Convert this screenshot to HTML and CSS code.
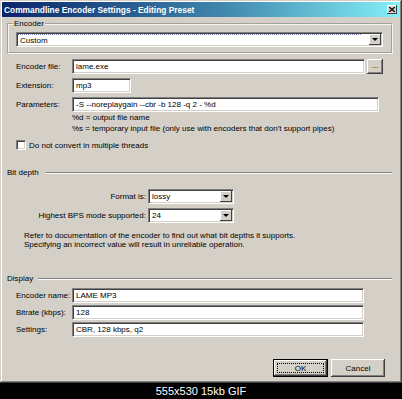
FILE: index.html
```html
<!DOCTYPE html>
<html lang="en">
<head>
<meta charset="UTF-8">
<meta name="viewport" content="width=device-width, initial-scale=1.0">
<title>Commandline Encoder Settings</title>
<link rel="stylesheet" href="styles.css">
</head>
<body>

<div class="window">
  <div class="titlebar">
    <span class="title">Commandline Encoder Settings - Editing Preset</span>
    <span class="close">
      <svg width="6" height="5" viewBox="0 0 6 5"><path d="M0 0 L6 5 M6 0 L0 5" stroke="#000" stroke-width="1.3"/></svg>
    </span>
  </div>

  <div class="content">
    <fieldset class="group">
      <legend>Encoder</legend>
      <div class="combo combo-wide">
        <span class="combo-text focus">Custom</span>
        <span class="arrow"><i></i></span>
      </div>
    </fieldset>

    <div class="form">
      <div class="row">
        <span class="label">Encoder file:</span>
        <div class="edit edit-file">lame.exe</div>
        <span class="btn browse">...</span>
      </div>
      <div class="row">
        <span class="label">Extension:</span>
        <div class="edit edit-ext">mp3</div>
      </div>
      <div class="row">
        <span class="label">Parameters:</span>
        <div class="edit edit-params">-S --noreplaygain --cbr -b 128 -q 2 - %d</div>
      </div>
      <div class="notes">
        <div>%d = output file name</div>
        <div>%s = temporary input file (only use with encoders that don't support pipes)</div>
      </div>
      <div class="check-row">
        <span class="checkbox"></span>
        <span>Do not convert in multiple threads</span>
      </div>
    </div>

    <div class="sep sep-bits">
      <span>Bit depth</span>
      <span class="line"></span>
    </div>

    <div class="brow brow-first">
      <span class="blabel">Format is:</span>
      <div class="combo combo-small">
        <span class="combo-text">lossy</span>
        <span class="arrow"><i></i></span>
      </div>
    </div>
    <div class="brow">
      <span class="blabel">Highest BPS mode supported:</span>
      <div class="combo combo-small">
        <span class="combo-text">24</span>
        <span class="arrow"><i></i></span>
      </div>
    </div>
    <div class="refer">
      <div>Refer to documentation of the encoder to find out what bit depths it supports.</div>
      <div>Specifying an incorrect value will result in unreliable operation.</div>
    </div>

    <div class="sep sep-display">
      <span>Display</span>
      <span class="line"></span>
    </div>

    <div class="form form-display">
      <div class="row row-tight">
        <span class="label">Encoder name:</span>
        <div class="edit edit-display">LAME MP3</div>
      </div>
      <div class="row row-tight">
        <span class="label">Bitrate (kbps):</span>
        <div class="edit edit-display">128</div>
      </div>
      <div class="row row-tight">
        <span class="label">Settings:</span>
        <div class="edit edit-display">CBR, 128 kbps, q2</div>
      </div>
    </div>

    <div class="buttons">
      <span class="btn btn-ok"><span class="focus-rect">OK</span></span>
      <span class="btn btn-cancel">Cancel</span>
    </div>
  </div>
</div>

<div class="caption">555x530 15kb GIF</div>

</body>
</html>
```

FILE: styles.css
```css
* {
  box-sizing: border-box;
}
body {
  margin: 0;
  width: 402px;
  height: 399px;
  overflow: hidden;
  background: #000;
  font-family: "Liberation Sans", Arial, sans-serif;
  font-size: 8px;
  color: #000;
}
.window {
  width: 402px;
  height: 383px;
  padding: 2px;
  background: #d4d0c8;
  box-shadow: inset -1px -1px #404040, inset 1px 1px #d4d0c8, inset -2px -2px #808080, inset 2px 2px #fff;
  display: flex;
  flex-direction: column;
}
.titlebar {
  height: 15px;
  flex: none;
  display: flex;
  align-items: center;
  justify-content: space-between;
  padding: 0 3px 0 2px;
  background: linear-gradient(to right, #0a246a, #3f86ac 55%, #84f0f8);
}
.title {
  color: #fff;
  font-weight: bold;
  font-size: 8.4px;
}
.close {
  width: 10px;
  height: 9px;
  background: #d4d0c8;
  box-shadow: inset -1px -1px #404040, inset 1px 1px #fff;
  display: flex;
  align-items: center;
  justify-content: center;
}
.content {
  padding: 2px 8px 0 5px;
  display: flex;
  flex-direction: column;
}

/* group box */
.group {
  margin: 0;
  padding: 4px 8px 5px 7px;
  border: 2px groove #f6f4f0;
}
.group legend {
  margin-left: -3px;
  padding: 0 1px;
  line-height: 9px;
}

/* sunken controls */
.edit, .combo, .checkbox {
  background: #fff;
  border: 1px solid;
  border-color: #808080 #fff #fff #808080;
  box-shadow: inset 1px 1px #404040, inset -1px -1px #d4d0c8;
}
.edit {
  height: 15px;
  line-height: 13px;
  padding-left: 3px;
  white-space: nowrap;
  overflow: hidden;
}
.combo {
  height: 15px;
  padding: 1px;
  display: flex;
}
.combo-text {
  flex: 1;
  line-height: 11px;
  padding-left: 2px;
}
.combo-text.focus {
  border-top: 1px dotted #7a84c4;
  margin-right: 8px;
}
.arrow {
  width: 12px;
  background: #d4d0c8;
  box-shadow: inset -1px -1px #404040, inset 1px 1px #fff;
  display: flex;
  align-items: center;
  justify-content: center;
}
.arrow i {
  width: 0;
  height: 0;
  border-left: 3px solid transparent;
  border-right: 3px solid transparent;
  border-top: 3px solid #000;
}
.combo-wide {
  width: 367px;
}
.combo-small {
  width: 86px;
  height: 15px;
}

/* raised buttons */
.btn {
  background: #d4d0c8;
  box-shadow: inset -1px -1px #404040, inset 1px 1px #fff, inset -2px -2px #808080;
  display: flex;
  align-items: center;
  justify-content: center;
}
.browse {
  width: 16px;
  height: 15px;
  margin-left: 2px;
  line-height: 8px;
  padding-bottom: 1px;
}

/* form rows */
.form {
  margin-top: 5px;
  padding-left: 9px;
}
.row {
  display: flex;
  align-items: center;
  margin-bottom: 4px;
}
.row-tight {
  margin-bottom: 2px;
}
.label {
  width: 56px;
  flex: none;
}
.edit-file {
  width: 293px;
}
.edit-ext {
  width: 59px;
}
.edit-params {
  width: 307px;
}
.edit-display {
  width: 292px;
}
.notes {
  margin-top: -4px;
  padding-left: 56px;
  line-height: 11px;
}
.check-row {
  margin-top: 6px;
  display: flex;
  align-items: center;
  height: 10px;
}
.checkbox {
  width: 10px;
  height: 10px;
  margin-right: 3px;
}

/* section separators */
.sep {
  display: flex;
  align-items: center;
  height: 9px;
}
.sep .line {
  flex: 1;
  height: 2px;
  border-top: 1px solid #808080;
  border-bottom: 1px solid #fff;
}
.sep-bits {
  margin-top: 18px;
}
.sep-bits .line {
  margin-left: 7px;
}
.sep-display {
  margin-top: 25px;
}
.sep-display .line {
  margin-left: 5px;
}

/* bit depth rows */
.brow {
  display: flex;
  align-items: center;
  margin-top: 4px;
}
.brow-first {
  margin-top: 12px;
}
.blabel {
  width: 139px;
  text-align: right;
  margin-right: 2px;
}
.refer {
  margin-top: 8px;
  padding-left: 17px;
  line-height: 9px;
}

.form-display {
  margin-top: 5px;
}

/* dialog buttons */
.buttons {
  margin-top: 20px;
  padding-right: 7px;
  display: flex;
  justify-content: flex-end;
  gap: 3px;
}
.btn-ok, .btn-cancel {
  height: 18px;
}
.btn-ok {
  width: 55px;
  border: 1px solid #000;
  padding: 3px;
}
.btn-cancel {
  width: 54px;
}
.focus-rect {
  width: 100%;
  height: 100%;
  border: 1px dotted #000;
  display: flex;
  align-items: center;
  justify-content: center;
}

.caption {
  height: 16px;
  line-height: 16px;
  text-align: center;
  color: #fff;
  font-size: 11px;
}
```
